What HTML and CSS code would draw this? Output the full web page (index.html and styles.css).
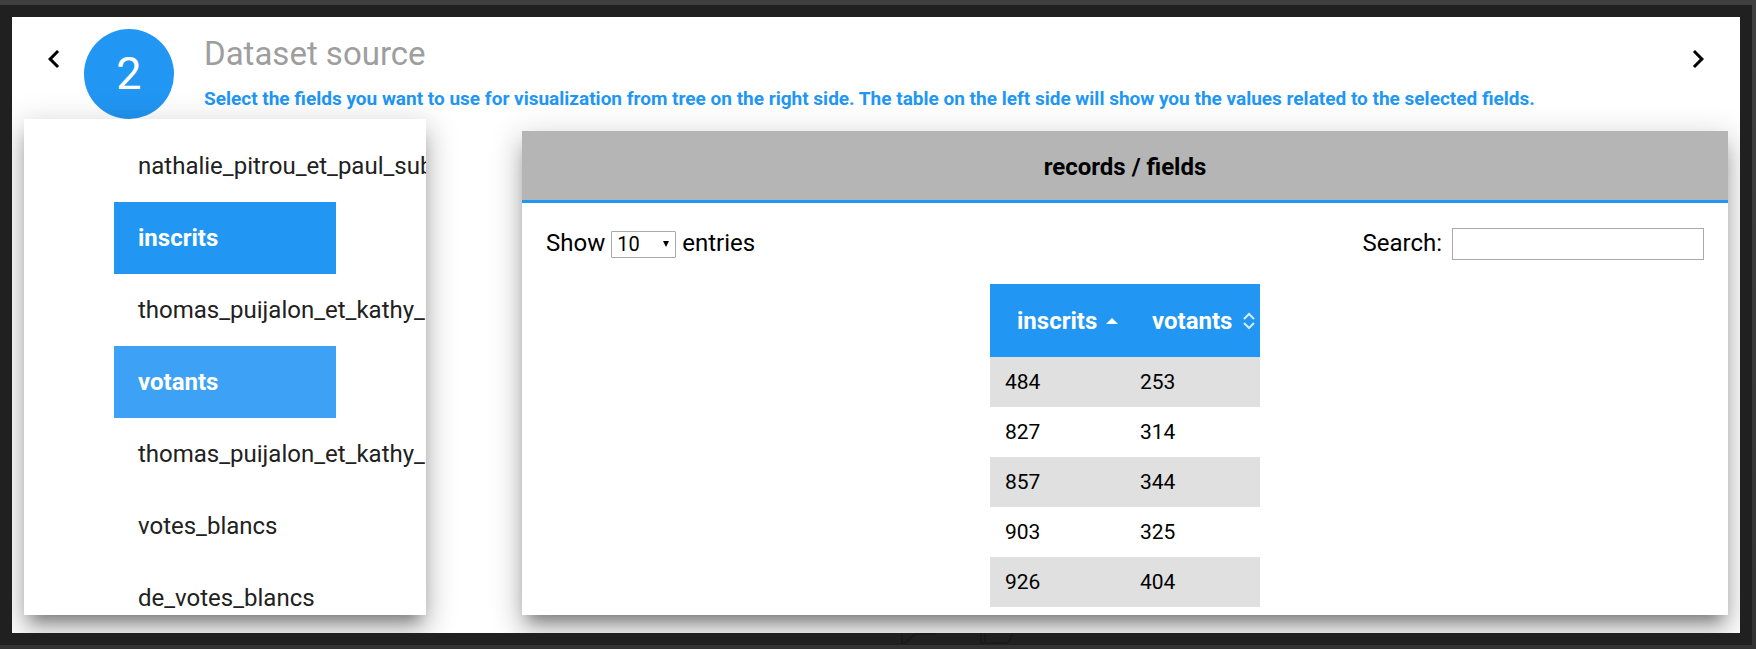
FILE: index.html
```html
<!DOCTYPE html>
<html lang="en">
<head>
<meta charset="utf-8">
<meta name="viewport" content="width=device-width, initial-scale=1">
<title>Dataset source</title>
<link rel="stylesheet" href="styles.css">
</head>
<body>
<div class="frame">
  <main class="dialog">
    <header class="step-header">
      <button class="nav-button" type="button" aria-label="Previous step">
        <svg class="chevron" viewBox="0 0 24 24" aria-hidden="true"><path d="M15.41 7.41 14 6l-6 6 6 6 1.41-1.41L10.83 12z"/></svg>
      </button>
      <div class="step-number">2</div>
      <div class="step-text">
        <h1 class="step-title">Dataset source</h1>
        <p class="step-hint">Select the fields you want to use for visualization from tree on the right side. The table on the left side will show you the values related to the selected fields.</p>
      </div>
      <button class="nav-button" type="button" aria-label="Next step">
        <svg class="chevron" viewBox="0 0 24 24" aria-hidden="true"><path d="M10 6 8.590 7.410 13.170 12l-4.580 4.590L10 18l6-6z"/></svg>
      </button>
    </header>
    <div class="columns">
      <section class="tree-panel" aria-label="Fields">
        <ul class="tree">
          <li class="tree-item">nathalie_pitrou_et_paul_sub</li>
          <li class="tree-item selected">inscrits</li>
          <li class="tree-item">thomas_puijalon_et_kathy_</li>
          <li class="tree-item selected hovered">votants</li>
          <li class="tree-item">thomas_puijalon_et_kathy_</li>
          <li class="tree-item">votes_blancs</li>
          <li class="tree-item">de_votes_blancs</li>
        </ul>
      </section>
      <section class="records-panel">
        <h2 class="records-title">records / fields</h2>
        <div class="records-body">
          <div class="toolbar">
            <div class="control">
              <label class="caption" for="length">Show</label>
              <span class="select-wrap">
                <select id="length" class="length-select"><option>10</option><option>25</option><option>50</option></select>
                <svg class="select-arrow" viewBox="0 0 6 6" aria-hidden="true"><path d="M0 0h6L3 6z"/></svg>
              </span>
              <span class="caption">entries</span>
            </div>
            <div class="control search">
              <label class="caption" for="search">Search:</label>
              <input id="search" class="search-input" type="text">
            </div>
          </div>
          <table class="records">
            <thead>
              <tr>
                <th scope="col"><span class="head">inscrits
                  <svg class="sort" viewBox="0 0 12 18" aria-hidden="true"><path d="M0 12 6 6l6 6z" fill="#fff"/></svg></span></th>
                <th scope="col"><span class="head">votants
                  <svg class="sort" viewBox="0 0 12 18" aria-hidden="true"><path d="M1 7l5-5 5 5M1 11l5 5 5-5" fill="none" stroke="#d6ebfd" stroke-width="2"/></svg></span></th>
              </tr>
            </thead>
            <tbody>
              <tr><td>484</td><td>253</td></tr>
              <tr><td>827</td><td>314</td></tr>
              <tr><td>857</td><td>344</td></tr>
              <tr><td>903</td><td>325</td></tr>
              <tr><td>926</td><td>404</td></tr>
            </tbody>
          </table>
        </div>
      </section>
    </div>
  </main>
  <svg class="backdrop-icons" viewBox="0 0 120 12" aria-hidden="true"><path d="M1 0v10h3L14 1h21M80 0v10M84 0v10h22q4-3 5-10M80 10h5" fill="none" stroke="#191b1b" stroke-width="2"/></svg>
</div>
</body>
</html>
```
FILE: styles.css
```css
* {
  box-sizing: border-box;
}

body {
  margin: 0;
  height: 100vh;
  display: flex;
  padding: 5px 4px 4px 0;
  background: linear-gradient(#404040, #333);
  color: #000;
  font-family: Roboto, "Liberation Sans", sans-serif;
  font-size: 24px;
  line-height: 36px;
}

.frame {
  position: relative;
  flex: 1;
  min-width: 0;
  display: flex;
  padding: 12px;
  background: #202020;
}

.dialog {
  flex: 1;
  min-width: 0;
  display: flex;
  flex-direction: column;
  padding: 12px 12px 18px;
  background: #fff;
  overflow: hidden;
}

.step-header {
  display: flex;
  align-items: flex-start;
}

.nav-button {
  flex: none;
  width: 60px;
  height: 60px;
  padding: 12px;
  border: 0;
  background: none;
}

.chevron {
  display: block;
  width: 36px;
  height: 36px;
  fill: #000;
}

.step-number {
  flex: none;
  width: 90px;
  height: 90px;
  border-radius: 50%;
  background: #2196f3;
  color: #fff;
  font-size: 45px;
  line-height: 90px;
  text-align: center;
}

.step-text {
  flex: 1;
  min-width: 0;
  padding-left: 30px;
}

.step-title {
  margin: 0 0 6px;
  color: #9e9e9e;
  font-size: 33px;
  font-weight: 400;
  line-height: 50px;
}

.step-hint {
  margin: 0;
  color: #2196f3;
  font-size: 19px;
  font-weight: 700;
  line-height: 28px;
}

.columns {
  flex: 1;
  min-height: 0;
  display: grid;
  grid-template-columns: 1fr 3fr;
  grid-template-rows: minmax(0, 1fr);
  gap: 96px;
}

.tree-panel,
.records-panel {
  min-width: 0;
  background: #fff;
  box-shadow: 0 16px 24px 2px rgba(0, 0, 0, 0.14),
    0 6px 30px 5px rgba(0, 0, 0, 0.12),
    0 12px 15px -7px rgba(0, 0, 0, 0.4);
  overflow: hidden;
}

.tree {
  margin: 0;
  padding: 11px 90px 0;
  list-style: none;
}

.tree-item {
  height: 72px;
  padding-left: 24px;
  color: #212121;
  font-weight: 400;
  line-height: 72px;
  white-space: nowrap;
}

.tree-item.selected {
  background: #2196f3;
  color: #fff;
  font-weight: 700;
}

.tree-item.hovered {
  background: #3da2f5;
}

.records-panel {
  margin-top: 12px;
}

.records-title {
  margin: 0;
  padding-top: 3px;
  border-bottom: 3px solid #2196f3;
  background: #b5b5b5;
  font-size: 24px;
  font-weight: 700;
  line-height: 66px;
  text-align: center;
}

.records-body {
  padding: 25px 24px 24px;
}

.toolbar {
  display: flex;
  justify-content: space-between;
  align-items: center;
  margin-bottom: 24px;
  line-height: 28px;
}

.control {
  display: flex;
  align-items: center;
  gap: 6px;
}

.control.search {
  gap: 10px;
}

.caption {
  padding-bottom: 2px;
}

.select-wrap {
  position: relative;
  display: block;
  height: 27px;
}

.length-select {
  display: block;
  width: 65px;
  height: 27px;
  padding: 0 5px;
  border: 1px solid #a9a9a9;
  border-radius: 1px;
  background: #fff;
  color: #000;
  font: 400 20px/24px Roboto, "Liberation Sans", sans-serif;
  appearance: none;
}

.select-arrow {
  position: absolute;
  top: 10px;
  right: 7px;
  width: 6px;
  height: 6px;
  pointer-events: none;
}

.search-input {
  width: 252px;
  height: 32px;
  padding: 2px 4px;
  border: 1px solid #a9a9a9;
  background: #fff;
  font: 400 20px/24px Roboto, "Liberation Sans", sans-serif;
}

.records {
  margin: 0 auto;
  border-collapse: collapse;
  table-layout: fixed;
  width: 270px;
}

.records th {
  height: 73px;
  padding: 0 0 0 27px;
  background: #2196f3;
  color: #fff;
  font-weight: 700;
  text-align: left;
}

.head {
  display: flex;
  align-items: center;
  justify-content: space-between;
  padding-right: 5px;
}

.records th:first-child .head {
  padding-right: 7px;
}

.sort {
  width: 12px;
  height: 18px;
}

.records td {
  height: 50px;
  padding: 0 15px;
  font-size: 21px;
  font-weight: 400;
  line-height: 30px;
}

.records tbody tr:nth-child(odd) {
  background: #e0e0e0;
}

.backdrop-icons {
  position: absolute;
  bottom: 0;
  left: 901px;
  width: 120px;
  height: 12px;
}
```
